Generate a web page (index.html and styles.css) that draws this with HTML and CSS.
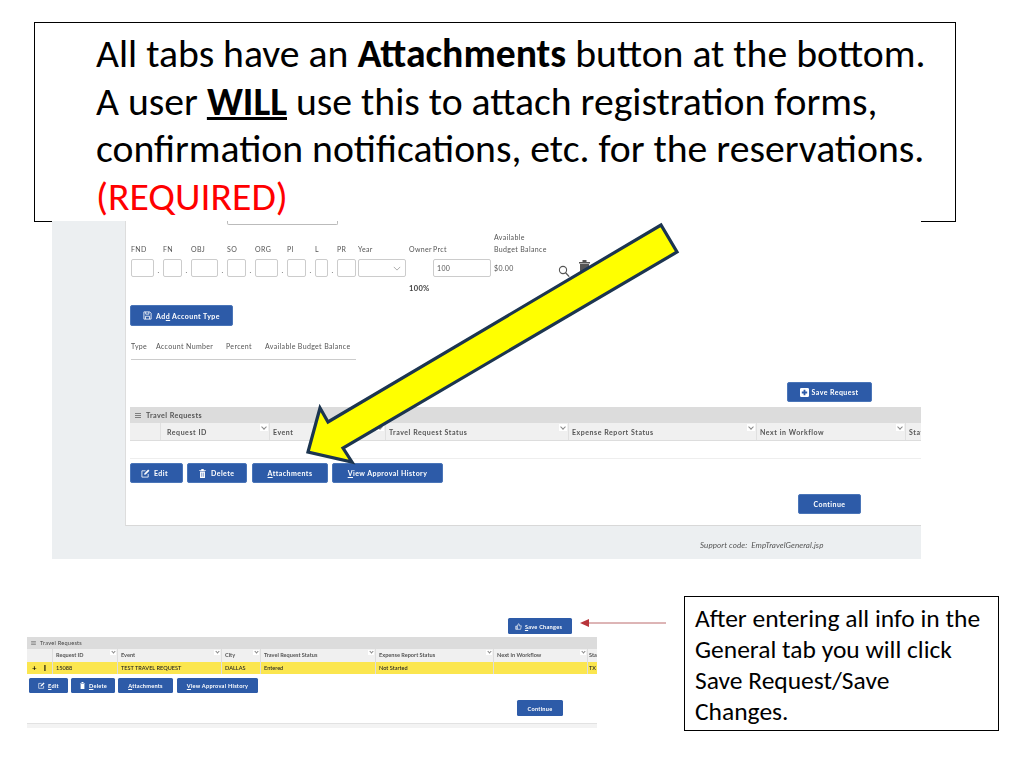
FILE: index.html
```html
<!DOCTYPE html>
<html lang="en">
<head>
<meta charset="utf-8">
<title>Attachments</title>
<link rel="stylesheet" href="styles.css">
</head>
<body>
<main class="slide">
  <section class="title-box">
    <p>All tabs have an <b>Attachments</b> button at the bottom.</p>
    <p>A user <b><u>WILL</u></b> use this to attach registration forms,</p>
    <p>confirmation notifications, etc. for the reservations.</p>
    <p class="req">(REQUIRED)</p>
  </section>

  <section class="shot-a">
    <div class="card">
      <div class="stub"></div>
      <div class="fields">
        <span class="c12 r1">Available</span>
        <span class="r2">FND</span><span class="r2">FN</span><span class="r2">OBJ</span><span class="r2">SO</span><span class="r2">ORG</span><span class="r2">PI</span><span class="r2">L</span><span class="r2">PR</span><span class="r2">Year</span><span class="r2">Owner</span><span class="r2">Prct</span><span class="r2 nowrap">Budget Balance</span>
        <div class="ctl"><i class="box"></i><span class="dot">.</span></div>
        <div class="ctl"><i class="box"></i><span class="dot">.</span></div>
        <div class="ctl"><i class="box"></i><span class="dot">.</span></div>
        <div class="ctl"><i class="box"></i><span class="dot">.</span></div>
        <div class="ctl"><i class="box"></i><span class="dot">.</span></div>
        <div class="ctl"><i class="box"></i><span class="dot">.</span></div>
        <div class="ctl"><i class="box"></i><span class="dot">.</span></div>
        <div class="ctl pr"><i class="box"></i></div>
        <div class="ctl yr"><i class="box select"><svg class="chev" viewBox="0 0 10 6"><path d="M1 1l4 4 4-4" fill="none" stroke="#999" stroke-width="1"/></svg></i></div>
        <div class="ctl"></div>
        <div class="ctl yr"><i class="box val">100</i></div>
        <div class="ctl"><span class="money">$0.00</span></div>
        <div class="ctl tools">
          <svg class="ic-search" viewBox="0 0 12 14"><circle cx="5" cy="6" r="3.6" fill="none" stroke="#555" stroke-width="1.1"/><path d="M7.6 8.8l3.6 3.8" stroke="#555" stroke-width="1.3"/></svg>
          <svg class="ic-bin" viewBox="0 0 11 15"><path d="M0 2h11v1.400H0zM3.500 0h4v2h-4zM1 4h9v11H1z" fill="#555"/></svg>
        </div>
        <b class="total">100%</b>
      </div>
      <a class="btn add"><svg class="ic" viewBox="0 0 10 10"><path d="M1 1h6.500L9 2.500V9H1zM3 1v2.500h3.500V1M2.800 9V5.800h4.400V9" fill="none" stroke="#fff" stroke-width=".9"/></svg><span>Ad<u>d</u> Account Type</span></a>
      <div class="acct"><span class="a1">Type</span><span class="a2">Account Number</span><span class="a3">Percent</span><span>Available Budget Balance</span></div>
      <div class="save-row"><a class="btn save"><svg class="ic" viewBox="0 0 10 10"><path d="M1.500 0h7A1.500 1.500 0 0 1 10 1.500v7A1.500 1.500 0 0 1 8.500 10h-7A1.500 1.500 0 0 1 0 8.500v-7A1.500 1.500 0 0 1 1.500 0zM4 2v2H2v2h2v2h2V6h2V4H6V2z" fill="#fff" fill-rule="evenodd"/></svg><span>Save Request</span></a></div>
      <div class="panel">
        <div class="bar"><svg class="menu" viewBox="0 0 6 5"><path d="M0 .5h6M0 2.500h6M0 4.500h6" stroke="#666" stroke-width=".8"/></svg>Travel Requests</div>
        <div class="head">
          <span class="hc"></span>
          <span class="hc">Request ID<i class="sort"></i></span>
          <span class="hc">Event<i class="sort"></i></span>
          <span class="hc">Travel Request Status<i class="sort"></i></span>
          <span class="hc">Expense Report Status<i class="sort"></i></span>
          <span class="hc">Next in Workflow<i class="sort"></i></span>
          <span class="hc">Stat</span>
        </div>
        <div class="empty"></div>
      </div>
      <div class="actions">
        <a class="btn edit"><svg class="ic" viewBox="0 0 10 10"><path d="M8 5.500V9H1V2h4" fill="none" stroke="#fff" stroke-width=".9"/><path d="M3.500 6.500l.4-1.800L8 .6l1.400 1.400-4.100 4.100z" fill="#fff"/></svg><span>Edit</span></a>
        <a class="btn del"><svg class="ic" viewBox="0 0 10 11"><path d="M1 1.500h8v1H1zM3.500 0h3v1.500h-3zM2 3h6v8H2z" fill="#fff"/><path d="M4 4.500v5M6 4.500v5" stroke="#2f5da8" stroke-width=".7"/></svg><span>Delete</span></a>
        <a class="btn att"><span><u>A</u>ttachments</span></a>
        <a class="btn hist"><span><u>V</u>iew Approval History</span></a>
      </div>
      <div class="cont-row"><a class="btn cont">Continue</a></div>
    </div>
    <p class="support">Support code:&nbsp; EmpTravelGeneral.jsp</p>
  </section>

  <section class="shot-b">
    <div class="save-b"><a class="btn2 sc"><svg class="ic2" viewBox="0 0 10 10"><path d="M1 4.500h2V9H1zM3 4.500L5 1c1 0 1.300.8 1 1.700L5.800 4H9l-1 5H3z" fill="none" stroke="#fff" stroke-width=".9"/></svg><span><u>S</u>ave Changes</span></a></div>
    <div class="bar2"><svg class="menu2" viewBox="0 0 6 5"><path d="M0 .5h6M0 2.500h6M0 4.500h6" stroke="#666" stroke-width=".8"/></svg>Travel Requests</div>
    <div class="head2 cols2">
      <span class="c2"></span>
      <span class="c2">Request ID<i class="sort2"></i></span>
      <span class="c2">Event<i class="sort2"></i></span>
      <span class="c2">City<i class="sort2"></i></span>
      <span class="c2">Travel Request Status<i class="sort2"></i></span>
      <span class="c2">Expense Report Status<i class="sort2"></i></span>
      <span class="c2">Next in Workflow<i class="sort2"></i></span>
      <span class="c2">Sta</span>
    </div>
    <div class="row2 cols2">
      <span class="c2 mark"><b>+</b><b>I</b></span>
      <span class="c2">15088</span>
      <span class="c2">TEST TRAVEL REQUEST</span>
      <span class="c2">DALLAS</span>
      <span class="c2">Entered</span>
      <span class="c2">Not Started</span>
      <span class="c2"></span>
      <span class="c2">TX</span>
    </div>
    <div class="actions2">
      <a class="btn2 e2"><svg class="ic2" viewBox="0 0 10 10"><path d="M8 5.500V9H1V2h4" fill="none" stroke="#fff" stroke-width=".9"/><path d="M3.500 6.500l.4-1.800L8 .6l1.400 1.400-4.100 4.100z" fill="#fff"/></svg><span><u>E</u>dit</span></a>
      <a class="btn2 d2"><svg class="ic2" viewBox="0 0 10 11"><path d="M1 1.500h8v1H1zM3.500 0h3v1.500h-3zM2 3h6v8H2z" fill="#fff"/></svg><span><u>D</u>elete</span></a>
      <a class="btn2 a2b"><span><u>A</u>ttachments</span></a>
      <a class="btn2 v2"><span><u>V</u>iew Approval History</span></a>
    </div>
    <div class="cont2-row"><a class="btn2 c2b">Continue</a></div>
    <div class="foot2"></div>
  </section>

  <svg class="big-arrow" viewBox="0 0 1024 768">
    <path d="M308 452L320 408 328 422 661 225 677 252 343 448 352 462z" fill="#ffff00" stroke="#1c3550" stroke-width="3.200" stroke-linejoin="miter"/>
  </svg>
  <svg class="red-arrow" viewBox="0 0 86 8"><path d="M8 4h78" stroke="#bb6a6c" stroke-width="1"/><path d="M0 4l9-4v8z" fill="#b8353b"/></svg>

  <section class="note">After entering all info in the General tab you will click Save Request/Save Changes.</section>
</main>
</body>
</html>
```

FILE: styles.css
```css
* { box-sizing: border-box; }
html, body { margin: 0; padding: 0; background: #fff; }
p { margin: 0; }
i { font-style: normal; }
.slide { position: relative; width: 1024px; height: 768px; overflow: hidden; background: #fff; font-family: Carlito, Lato, sans-serif; color: #000; }

.title-box { position: absolute; left: 34px; top: 22px; width: 922px; height: 200px; border: 1px solid #000; padding: 7px 0 0 61px; font-size: 39.700px; line-height: 47.700px; white-space: nowrap; }
.req { color: #f00; }

.shot-a { position: absolute; left: 52px; top: 221px; width: 869px; height: 338px; background: #eceff1; padding-left: 73px; font-family: Lato, sans-serif; font-size: 7px; color: #555; overflow: hidden; filter: blur(.25px); }
.card { width: 796px; height: 305px; background: #fff; border-left: 1px solid #ddd; border-bottom: 1px solid #d8d8d8; padding-left: 4px; }
.stub { width: 111px; height: 4px; margin-left: 97px; border: 1px solid #bbb; border-top: 0; border-radius: 0 0 2px 2px; }
.fields { display: grid; grid-template-columns: 32px 28px 36px 28px 32px 28px 22px 21px 51px 24px 61px 64px 40px; grid-template-rows: 12px 12px 22px 24px; margin: 6px 0 0 1px; letter-spacing: .35px; }
.r1, .r2 { line-height: 12px; white-space: nowrap; }
.c12 { grid-column: 12; grid-row: 1; }
.r2 { grid-row: 2; }
.ctl { grid-row: 3; display: flex; align-items: flex-end; height: 22px; }
.box { flex: 1; height: 18px; border: 1px solid #ccc; border-radius: 2px; background: #fff; display: flex; align-items: center; padding-left: 3px; }
.dot { width: 9px; text-align: center; line-height: 14px; }
.pr { padding-right: 2px; }
.yr { padding-right: 3px; }
.select { justify-content: flex-end; padding-right: 4px; }
.chev { width: 8px; height: 5px; }
.money { line-height: 18px; }
.tools { gap: 9px; align-items: flex-end; }
.ic-search { width: 12px; height: 14px; margin-bottom: -1px; }
.ic-bin { width: 11px; height: 15px; margin-bottom: 2px; }
.total { grid-column: 10; grid-row: 4; font-size: 7.500px; line-height: 24px; color: #444; }

.btn { display: flex; align-items: center; justify-content: center; height: 20px; background: #2d5ba8; color: #fff; border-radius: 2px; border: 1px solid #4a75b8; font-weight: 700; letter-spacing: .45px; font-size: 7px; white-space: nowrap; }
.ic { width: 9px; height: 9px; margin-right: 4px; }
.add { width: 103px; height: 21px; margin-top: 4px; }
.acct { display: flex; width: 225px; margin: 14px 0 0 1px; padding-bottom: 7px; border-bottom: 1px solid #ccc; line-height: 12px; letter-spacing: .35px; height: 20px; }
.a1 { width: 25px; }
.a2 { width: 70px; }
.a3 { width: 39px; }
.save-row { display: flex; justify-content: flex-end; padding-right: 49px; margin-top: 22px; }
.save { width: 85px; }
.save .ic { margin-right: 2px; }
.panel { margin-top: 5px; }
.bar { display: flex; align-items: center; height: 16px; background: #dcdcdc; padding-left: 5px; font-weight: 700; font-size: 7.200px; letter-spacing: .4px; color: #555; }
.menu { width: 6px; height: 5px; margin-right: 5px; }
.head { display: grid; grid-template-columns: 31px 109px 116px 183px 188px 149px 15px; height: 18px; background: #f0f0f0; border-bottom: 1px solid #ddd; }
.hc { position: relative; border-right: 1px solid #e0e0e0; padding-left: 3px; line-height: 18px; font-weight: 700; color: #555; letter-spacing: .55px; white-space: nowrap; overflow: hidden; }
.hc:nth-child(2) { padding-left: 6px; }
.hc:last-child { border-right: 0; }
.sort { position: absolute; right: 1px; top: 1px; width: 8px; height: 7px; background: #fff; }
.sort::after { content: ""; position: absolute; left: 2px; top: 1px; width: 3px; height: 3px; border-right: 1px solid #888; border-bottom: 1px solid #888; transform: rotate(45deg); }
.empty { height: 18px; background: #fff; border-bottom: 1px solid #eee; }
.actions { display: flex; margin-top: 4px; }
.edit { width: 53px; margin-right: 4px; }
.del { width: 60px; margin-right: 5px; }
.att { width: 76px; margin-right: 4px; }
.hist { width: 111px; }
.edit, .del { justify-content: flex-start; padding-left: 10px; }
.cont-row { display: flex; justify-content: flex-end; padding-right: 60px; margin-top: 11px; }
.cont { width: 63px; }
.support { margin: 12px 0 0 575px; font-style: italic; font-size: 8px; line-height: 14px; letter-spacing: .1px; color: #555; white-space: nowrap; }

.shot-b { position: absolute; left: 27px; top: 618px; width: 570px; height: 110px; font-family: Lato, sans-serif; font-size: 5.600px; color: #444; filter: blur(.3px); }
.btn2 { display: flex; align-items: center; justify-content: center; height: 15px; background: #2d5ba8; color: #fff; border-radius: 1.500px; font-weight: 700; letter-spacing: .25px; white-space: nowrap; }
.ic2 { width: 7px; height: 7px; margin-right: 3px; }
.save-b { display: flex; justify-content: flex-end; padding-right: 25px; height: 19px; }
.sc { width: 64px; height: 16px; padding-right: 3px; }
.bar2 { display: flex; align-items: center; height: 12px; background: #dcdcdc; padding: 0 0 1px 4px; font-weight: 400; letter-spacing: .25px; }
.menu2 { width: 5px; height: 4px; margin-right: 4px; }
.cols2 { display: grid; grid-template-columns: 26px 65px 104px 39px 115px 118px 94px 9px; }
.head2 { height: 13px; background: #f0f0f0; }
.row2 { height: 12px; background: #fbe64f; color: #222; font-weight: 500; }
.c2 { position: relative; padding-left: 3px; border-right: 1px solid #ddd; line-height: 12px; white-space: nowrap; overflow: hidden; }
.head2 .c2 { font-weight: 700; color: #555; }
.c2:last-child { border-right: 0; padding-left: 1px; }
.mark { display: flex; gap: 7px; padding-left: 5px; font-size: 8px; color: #000; }
.sort2 { position: absolute; right: 1px; top: 1px; width: 6px; height: 5px; background: #fff; }
.sort2::after { content: ""; position: absolute; left: 2px; top: 0; width: 2px; height: 2px; border-right: 1px solid #888; border-bottom: 1px solid #888; transform: rotate(45deg); }
.actions2 { display: flex; margin: 4px 0 0 2px; }
.e2 { width: 39px; margin-right: 3px; }
.d2 { width: 44px; margin-right: 3px; }
.a2b { width: 55px; margin-right: 4px; }
.v2 { width: 81px; }
.cont2-row { display: flex; justify-content: flex-end; padding-right: 34px; margin-top: 7px; }
.c2b { width: 46px; height: 16px; }
.foot2 { height: 5px; margin-top: 7px; background: #f3f3f3; border-top: 1px solid #e2e2e2; }

.big-arrow { position: absolute; left: 0; top: 0; width: 1024px; height: 768px; }
.red-arrow { position: absolute; left: 580px; top: 619px; width: 86px; height: 8px; }

.note { position: absolute; left: 684px; top: 596px; width: 315px; height: 135px; border: 1px solid #000; padding: 6px 16px 0 10px; font-size: 25.500px; line-height: 31px; }
```
